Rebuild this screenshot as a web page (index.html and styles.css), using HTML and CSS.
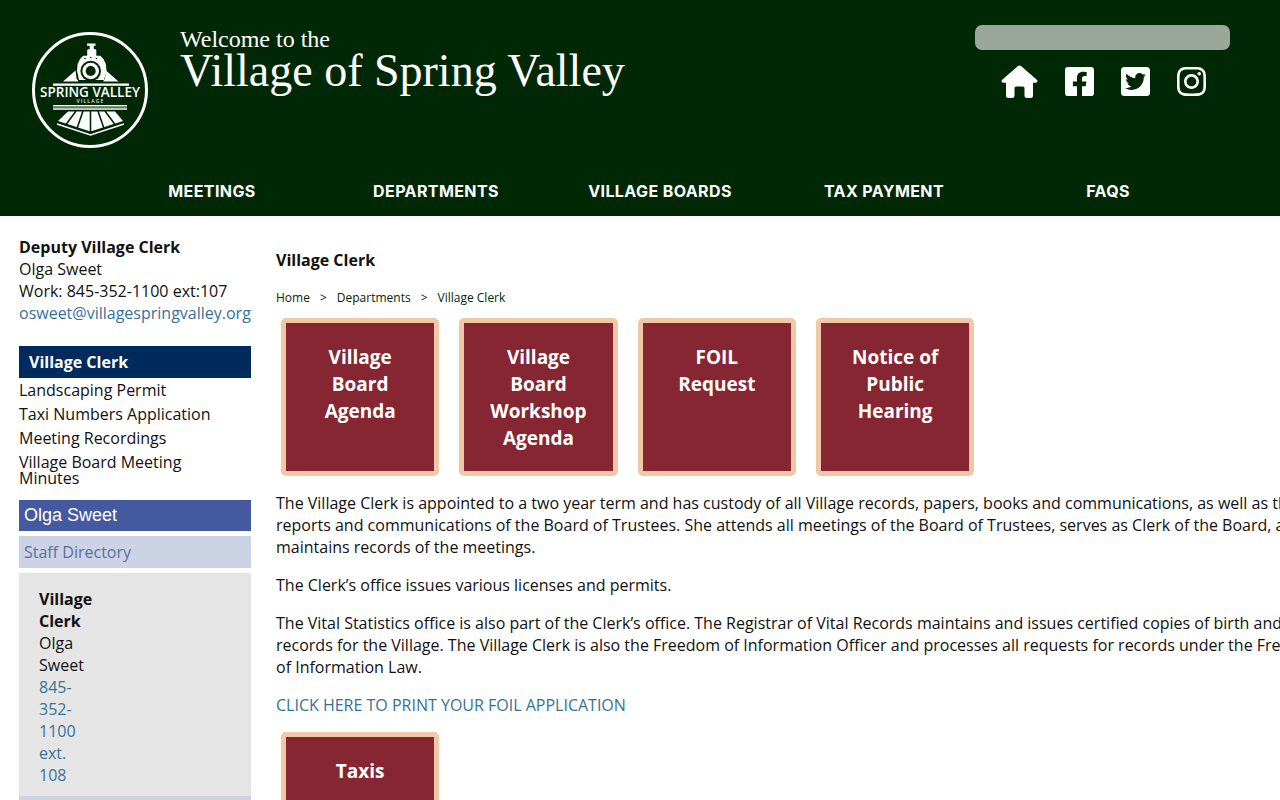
FILE: index.html
```html
<!DOCTYPE html>
<html lang="en">
<head>
<meta charset="utf-8">
<title>Village of Spring Valley - Village Clerk</title>
<link rel="stylesheet" href="styles.css">
</head>
<body>
<header class="site-header">
  <div class="header-top">
    <a class="logo" href="#" aria-label="Spring Valley Village">
      <svg class="logo-svg" viewBox="0 0 116 116">
        <circle class="logo-ring" cx="58" cy="58" r="56.5"/>
        <path class="logo-fill" d="M55 11.500h8.500v2.200h-1.700v3l2.500 1v6h4l3 3 2.500 5 .7 7-2.500 9.300H47l-2-9.300.7-7 2.500-5 3-3h4v-6l2.500-1v-3H55z"/>
        <path class="logo-fill" d="M43.500 38.500L31 49.500h15.500l-2-3zM74 38.500l12.500 11H71l2-3z"/>
        <circle class="logo-dark" cx="53" cy="26.500" r=".8"/>
        <circle class="logo-dark" cx="58.700" cy="25.500" r=".8"/>
        <circle class="logo-dark" cx="64.500" cy="26.500" r=".8"/>
        <circle class="logo-dark" cx="58.700" cy="39" r="10.300"/>
        <circle class="logo-fill" cx="58.700" cy="39" r="8.300"/>
        <circle class="logo-dark" cx="58.700" cy="39" r="5"/>
        <rect class="logo-fill" x="21" y="51.500" width="76" height="2.300"/>
        <text class="logo-name" x="58" y="64.500">SPRING VALLEY</text>
        <text class="logo-sub" x="58.500" y="71.300">VILLAGE</text>
        <rect class="logo-fill" x="21" y="73" width="74" height="1.500"/>
        <rect class="logo-soft" x="21" y="75.500" width="74" height="2.500"/>
        <path class="logo-fill" d="M36 79.500h47l8 9.500-32.500 10.500L26 89z"/>
        <path class="logo-gap" d="M44 79L34 92.500M51 79L45 96.500M58.500 79v21M66 79l6 17.500M73 79l10 13.500"/>
        <path class="logo-band" d="M25 92l33.500 11L92 92"/>
      </svg>
    </a>
    <div class="site-title">
      <div class="title-small">Welcome to the</div>
      <div class="title-large">Village of Spring Valley</div>
    </div>
    <div class="header-tools">
      <div class="search-box"></div>
      <div class="social">
        <a href="#" class="icon-home" aria-label="Home">
          <svg viewBox="0 0 37 33"><path d="M17 1.100a2.500 2.500 0 0 1 3 0l15.800 13.700a1.700 1.700 0 0 1-1.100 3H32v12.700a2.500 2.500 0 0 1-2.500 2.500H26a2.500 2.500 0 0 1-2.500-2.500V23a1.500 1.500 0 0 0-1.500-1.500h-7a1.500 1.500 0 0 0-1.500 1.500v7.500a2.500 2.500 0 0 1-2.500 2.500H7.500A2.500 2.500 0 0 1 5 30.500V17.800H2.300a1.700 1.700 0 0 1-1.100-3z"/></svg>
        </a>
        <a href="#" class="icon-brand" aria-label="Facebook">
          <svg viewBox="0 32 448 448"><path d="M400 32H48A48 48 0 0 0 0 80v352a48 48 0 0 0 48 48h137.250V327.690h-63V256h63v-54.640c0-62.150 37-96.480 93.670-96.480 27.140 0 55.520 4.840 55.520 4.840v61h-31.270c-30.810 0-40.420 19.120-40.420 38.730V256h68.780l-11 71.690h-57.780V480H400a48 48 0 0 0 48-48V80a48 48 0 0 0-48-48z"/></svg>
        </a>
        <a href="#" class="icon-brand" aria-label="Twitter">
          <svg viewBox="0 32 448 448"><path d="M400 32H48C21.500 32 0 53.500 0 80v352c0 26.500 21.500 48 48 48h352c26.500 0 48-21.500 48-48V80c0-26.500-21.500-48-48-48zm-48.900 158.800c.2 2.800.2 5.700.2 8.500 0 86.700-66 186.600-186.600 186.600-37.200 0-71.700-10.800-100.700-29.400 5.300.6 10.400.8 15.800.8 30.700 0 58.900-10.400 81.400-28-28.800-.6-53-19.500-61.300-45.500 10.100 1.500 19.200 1.500 29.600-1.200-30-6.100-52.500-32.500-52.500-64.400v-.8c8.700 4.900 18.900 7.900 29.600 8.300a65.447 65.447 0 0 1-29.200-54.600c0-12.200 3.200-23.400 8.900-33.100 32.300 39.800 80.800 65.800 135.200 68.600-9.300-44.500 24-80.600 64-80.600 18.900 0 35.900 7.900 47.900 20.700 14.800-2.800 29-8.300 41.600-15.800-4.900 15.200-15.100 28-28.600 36.100 13.100-1.400 25.800-5.100 37.600-10.200-8.900 13.100-20.100 24.700-32.900 34z"/></svg>
        </a>
        <a href="#" class="icon-brand" aria-label="Instagram">
          <svg viewBox="0 32 448 448"><path d="M224.100 141c-63.600 0-114.900 51.300-114.900 114.900s51.300 114.900 114.900 114.900S339 319.500 339 255.900 287.700 141 224.100 141zm0 189.600c-41.100 0-74.700-33.500-74.700-74.700s33.500-74.700 74.700-74.700 74.700 33.500 74.700 74.700-33.600 74.700-74.700 74.700zm146.400-194.300c0 14.900-12 26.800-26.800 26.800-14.900 0-26.800-12-26.800-26.800s12-26.800 26.800-26.800 26.800 12 26.800 26.800zm76.100 27.200c-1.700-35.900-9.900-67.700-36.200-93.900-26.200-26.200-58-34.400-93.900-36.200-37-2.100-147.900-2.100-184.900 0-35.800 1.700-67.600 9.900-93.900 36.100s-34.400 58-36.200 93.900c-2.100 37-2.100 147.900 0 184.900 1.700 35.900 9.900 67.700 36.200 93.900s58 34.400 93.900 36.200c37 2.100 147.900 2.100 184.900 0 35.900-1.700 67.700-9.900 93.900-36.200 26.200-26.200 34.400-58 36.200-93.900 2.100-37 2.100-147.800 0-184.800zM398.800 388c-7.800 19.600-22.900 34.700-42.600 42.600-29.500 11.700-99.500 9-132.100 9s-102.700 2.600-132.100-9c-19.600-7.800-34.700-22.900-42.600-42.600-11.700-29.500-9-99.500-9-132.100s-2.600-102.700 9-132.100c7.800-19.600 22.900-34.700 42.600-42.600 29.500-11.700 99.500-9 132.100-9s102.700-2.600 132.100 9c19.600 7.800 34.700 22.900 42.600 42.600 11.700 29.500 9 99.500 9 132.100s2.700 102.700-9 132.100z"/></svg>
        </a>
      </div>
    </div>
  </div>
  <nav class="main-nav">
    <a href="#">MEETINGS</a>
    <a href="#">DEPARTMENTS</a>
    <a href="#">VILLAGE BOARDS</a>
    <a href="#">TAX PAYMENT</a>
    <a href="#">FAQS</a>
  </nav>
</header>
<div class="page">
  <aside class="sidebar">
    <div class="contact">
      <strong>Deputy Village Clerk</strong><br>
      Olga Sweet<br>
      Work: 845-352-1100 ext:107<br>
      <a href="#">osweet@villagespringvalley.org</a>
    </div>
    <h3 class="side-head">Village Clerk</h3>
    <ul class="side-links">
      <li><a href="#">Landscaping Permit</a></li>
      <li><a href="#">Taxi Numbers Application</a></li>
      <li><a href="#">Meeting Recordings</a></li>
      <li><a href="#">Village Board Meeting Minutes</a></li>
    </ul>
    <div class="person-head">Olga Sweet</div>
    <div class="directory"><a href="#">Staff Directory</a></div>
    <div class="person-card">
      <div class="person-inner">
        <strong>Village Clerk</strong><br>
        Olga Sweet<br>
        <a href="#">845-352-1100 ext. 108</a>
      </div>
    </div>
    <div class="directory directory-empty"></div>
  </aside>
  <main class="content">
    <h1 class="page-title">Village Clerk</h1>
    <div class="crumbs">
      <a href="#">Home</a><span>&gt;</span><a href="#">Departments</a><span>&gt;</span><a href="#">Village Clerk</a>
    </div>
    <div class="tiles">
      <a class="tile" href="#">Village Board Agenda</a>
      <a class="tile" href="#">Village Board Workshop Agenda</a>
      <a class="tile" href="#">FOIL Request</a>
      <a class="tile" href="#">Notice of Public Hearing</a>
    </div>
    <p>The Village Clerk is appointed to a two year term and has custody of all Village records, papers, books and communications, as well as the reports and communications of the Board of Trustees. She attends all meetings of the Board of Trustees, serves as Clerk of the Board, and maintains records of the meetings.</p>
    <p>The Clerk’s office issues various licenses and permits.</p>
    <p>The Vital Statistics office is also part of the Clerk’s office. The Registrar of Vital Records maintains and issues certified copies of birth and death records for the Village. The Village Clerk is also the Freedom of Information Officer and processes all requests for records under the Freedom of Information Law.</p>
    <p><a href="#">CLICK HERE TO PRINT YOUR FOIL APPLICATION</a></p>
    <div class="tiles tiles-lower">
      <a class="tile" href="#">Taxis</a>
    </div>
  </main>
</div>
</body>
</html>
```

FILE: styles.css
```css
html, body {
  margin: 0;
  padding: 0;
  height: 800px;
  overflow: hidden;
}
body {
  background: #fff;
  color: #111;
  font-family: "Open Sans", sans-serif;
  font-size: 16px;
  line-height: 22px;
}
a {
  color: #35729a;
  text-decoration: none;
}
.site-header {
  background: #012805;
  height: 216px;
  display: flex;
  flex-direction: column;
}
.header-top {
  display: flex;
  height: 168px;
}
.logo {
  display: block;
  width: 116px;
  height: 116px;
  margin: 32px 0 0 32px;
}
.logo-svg {
  display: block;
  width: 116px;
  height: 116px;
}
.logo-ring {
  fill: none;
  stroke: #fff;
  stroke-width: 3px;
}
.logo-fill {
  fill: #fff;
}
.logo-soft {
  fill: #b9c4ba;
}
.logo-dark {
  fill: #012805;
}
.logo-gap {
  fill: none;
  stroke: #012805;
  stroke-width: 1.600px;
}
.logo-band {
  fill: none;
  stroke: #fff;
  stroke-width: 1.400px;
}
.logo-name {
  fill: #fff;
  font-family: "Open Sans", sans-serif;
  font-size: 13.500px;
  font-weight: 600;
  text-anchor: middle;
}
.logo-sub {
  fill: #dfe5df;
  font-family: "Open Sans", sans-serif;
  font-size: 5px;
  font-weight: 600;
  letter-spacing: 1.200px;
  text-anchor: middle;
}
.site-title {
  margin: 27px 0 0 32px;
  color: #fff;
  font-family: "Liberation Serif", serif;
  width: 500px;
}
.title-small {
  font-size: 24px;
  line-height: 24px;
}
.title-large {
  font-size: 46px;
  line-height: 40px;
}
.header-tools {
  margin: 25px 0 0 295px;
  width: 255px;
}
.search-box {
  height: 25px;
  background: #9aa89c;
  border-radius: 7px;
}
.social {
  display: flex;
  align-items: center;
  margin: 15px 0 0 26px;
}
.social a {
  display: block;
  flex-shrink: 0;
  fill: #fff;
}
.social svg {
  display: block;
  width: 100%;
  height: 100%;
}
.icon-home {
  width: 37px;
  height: 33px;
  margin-right: 27px;
}
.icon-brand {
  width: 29px;
  height: 29px;
  margin-right: 27px;
}
.main-nav {
  display: flex;
  padding-left: 100px;
}
.main-nav a {
  width: 224px;
  text-align: center;
  color: #fff;
  font-family: Inter, sans-serif;
  font-weight: 700;
  font-size: 16px;
  letter-spacing: 0.400px;
  line-height: 47px;
}
.page {
  display: flex;
  padding: 20px 0 0 19px;
  gap: 25px;
}
.sidebar {
  width: 232px;
  flex-shrink: 0;
}
.contact {
  margin-bottom: 22px;
  white-space: nowrap;
}
.side-head {
  margin: 0;
  background: #002b5c;
  color: #fff;
  font-size: 16px;
  font-weight: 700;
  line-height: 32px;
  padding-left: 10px;
}
.side-links {
  list-style: none;
  margin: 0;
  padding: 0 20px 0 0;
}
.side-links li {
  line-height: 16px;
  padding-top: 4px;
  padding-bottom: 4px;
}
.side-links a {
  color: #111;
}
.person-head {
  margin-top: 10px;
  background: #44599f;
  color: #fff;
  font-family: "Liberation Sans", sans-serif;
  font-size: 18px;
  line-height: 31px;
  padding-left: 5px;
}
.directory {
  margin-top: 5px;
  background: #ccd3e5;
  line-height: 32px;
  padding-left: 5px;
}
.directory a {
  color: #5a6f9f;
}
.directory-empty {
  margin-top: 0;
  height: 32px;
}
.person-card {
  margin-top: 5px;
  background: #e5e5e5;
  padding: 15px 0 10px 20px;
}
.person-inner {
  width: 56px;
}
.content {
  width: 1060px;
  flex-shrink: 0;
}
.page-title {
  margin: 13px 0 0;
  font-size: 16px;
  font-weight: 700;
  line-height: 22px;
}
.crumbs {
  margin-top: 18px;
  font-size: 12px;
  line-height: 18px;
}
.crumbs a {
  color: #012805;
}
.crumbs span {
  margin: 0 10px;
  color: #012805;
}
.tiles {
  display: flex;
  gap: 20px;
  padding: 11px 0 0 5px;
}
.tiles-lower {
  padding-top: 0;
}
.tile {
  box-sizing: border-box;
  width: 158.330px;
  height: 158px;
  border: 5px solid #f0c8a8;
  border-radius: 5px;
  background: #862633;
  color: #fff;
  font-size: 19px;
  font-weight: 700;
  line-height: 27px;
  padding: 21px 15px 0;
  text-align: center;
}
.content p {
  margin: 16px 0;
}
```
